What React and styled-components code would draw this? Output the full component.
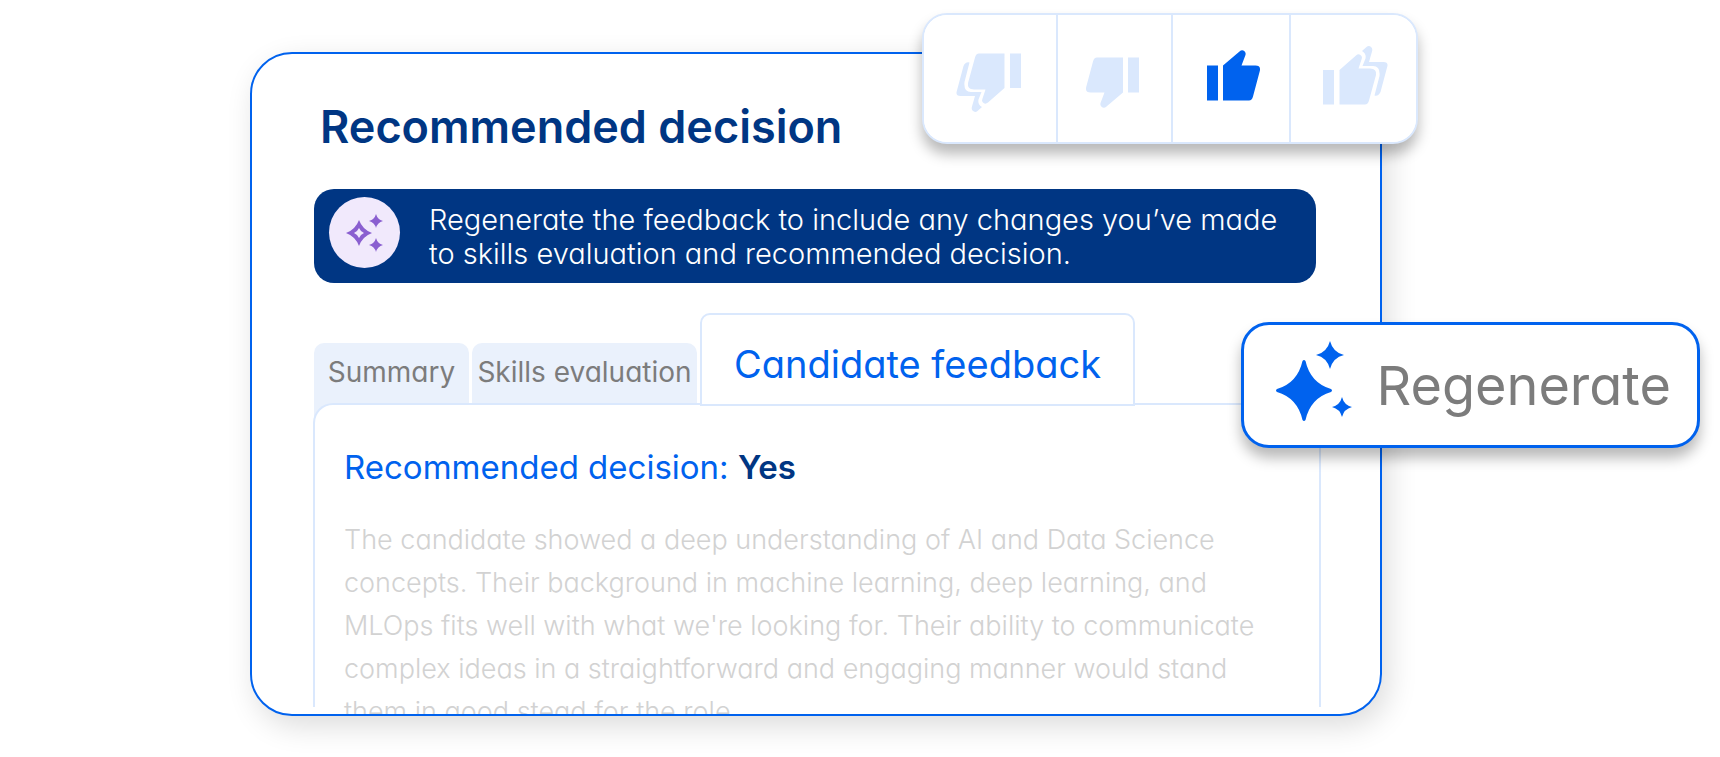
import React, {useState} from "react";
import styled, {createGlobalStyle, css} from "styled-components";

const GlobalStyle = createGlobalStyle`
:root {
--color-primary: #0062ee;
--color-navy: #003683;
--color-pale: #dae8fd;
--color-tab: #eaf1fc;
--color-grey: #7c7c7c;
--color-grey-light: #d2d2d2;
--shadow-float: 0 10px 14px rgba(0, 0, 0, 0.28);
}

* {
box-sizing: border-box;
}

body {
margin: 0;
background-color: white;
font-family: Inter, "Open Sans", sans-serif;
font-feature-settings: "cv11";
overflow-x: hidden;
}

button {
font: inherit;
font-feature-settings: inherit;
cursor: pointer;
}
`;

const Stage = styled.main`
position: relative;
margin: 52px 338px 40px 250px;
`;
const Card = styled.section`
height: 664px;
padding: 47px 60px 0 62px;
border: 2px solid var(--color-primary);
border-radius: 42px;
background-color: white;
box-shadow: 6px 10px 30px rgba(0, 0, 0, 0.14);
overflow: hidden;
`;
const Title = styled.h1`
margin: 0;
padding-left: 6px;
font-size: 45px;
line-height: 52px;
font-weight: 600;
color: var(--color-navy);
`;
const Banner = styled.div`
display: flex;
align-items: flex-start;
gap: 29px;
height: 94px;
margin: 36px 4px 0 0;
padding: 8px 15px;
border-radius: 20px;
background-color: var(--color-navy);
`;
const BannerText = styled.p`
margin: 0;
padding-top: 6px;
font-size: 29px;
line-height: 34px;
font-weight: 300;
color: white;
white-space: nowrap;
`;
const Badge = styled.span`
display: flex;
align-items: center;
justify-content: center;
flex: none;
width: 71px;
height: 71px;
border-radius: 50%;
background-color: #f1e9fc;
`;
const TabList = styled.div`
display: grid;
grid-template-columns: 155px 225px 435px;
align-items: end;
gap: 3px;
height: 91px;
margin: 30px 0 -1px;
`;
const Tab = styled.button`
height: 77px;
margin-bottom: -16px;
padding: 0 0 20px;
border: 0;
border-radius: 10px 10px 0 0;
background-color: var(--color-tab);
font-size: 28px;
color: var(--color-grey);
white-space: nowrap;

${({$active}) => $active && css`
position: relative;
z-index: 1;
height: 93px;
margin-bottom: -2px;
padding: 8px 0 0;
border: 2px solid var(--color-pale);
background-color: white;
font-size: 38px;
color: var(--color-primary);
`}
`;
const Panel = styled.div`
position: relative;
height: 304px;
margin: 0 -1px;
padding: 40px 29px 0;
border: 2px solid var(--color-pale);
border-bottom: 0;
border-radius: 20px 20px 0 0;
background-color: white;
`;
const Decision = styled.h2`
margin: 0;
font-size: 33px;
line-height: 44px;
font-weight: 400;
color: var(--color-primary);
`;
const Verdict = styled.strong`
font-weight: 600;
color: var(--color-navy);
`;
const Feedback = styled.p`
margin: 29px 0 0;
font-size: 27px;
line-height: 43px;
font-weight: 300;
color: var(--color-grey-light);
`;
const VoteBar = styled.div`
position: absolute;
top: -39px;
right: -36px;
display: grid;
grid-template-columns: 132px 115px 118px 127px;
height: 131px;
border: 2px solid var(--color-pale);
border-radius: 25px;
background-color: white;
box-shadow: var(--shadow-float);
overflow: hidden;
`;
const Vote = styled.button`
display: flex;
align-items: center;
justify-content: center;
padding: ${({$down}) => $down ? "8px 4px 0 0" : "0 0 6px 4px"};
border: 0;
background-color: white;
color: ${({$active}) => $active ? "var(--color-primary)" : "var(--color-pale)"};

& + & {
border-left: 2px solid var(--color-pale);
}
`;
const RegenerateButton = styled.button`
position: absolute;
top: 270px;
right: -318px;
display: flex;
align-items: center;
gap: 24px;
height: 126px;
padding: 0 26px 0 32px;
border: 3px solid var(--color-primary);
border-radius: 28px;
background-color: white;
box-shadow: var(--shadow-float);
font-size: 54px;
color: var(--color-grey);

svg {
color: var(--color-primary);
}
`;

const
votes = [
  {label: "Strong no", down: true, double: true},
  {label: "No", down: true},
  {label: "Yes"},
  {label: "Strong yes", double: true},
],
tabs = ["Summary", "Skills evaluation", "Candidate feedback"],
feedback = [
  "The candidate showed a deep understanding of AI and Data Science",
  "concepts. Their background in machine learning, deep learning, and",
  "MLOps fits well with what we're looking for. Their ability to communicate",
  "complex ideas in a straightforward and engaging manner would stand",
  "them in good stead for the role.",
],
Thumb = ({down}) => (
  <svg width="53" height="51" viewBox="0 0 53 51" fill="currentColor" aria-hidden="true">
    <g transform={down ? "rotate(180 26.5 25.5)" : undefined}>
      <path d="M0 15.500H11V50.500H0z"/>
      <path d="M16 15.500 32.500 1.500Q35 -.7 37.500 1.200Q39.300 2.800 38.300 5.500L34.500 15.500H48.500Q54 15.500 52.800 21L46 46.500Q45 50.500 42 50.500H16z"/>
    </g>
  </svg>
),
DoubleThumb = ({down}) => (
  <svg width="65" height="59" viewBox="0 0 65 59" fill="currentColor" aria-hidden="true">
    <g transform={down ? "rotate(180 32.5 29.5)" : undefined}>
      <path d="M0 24H11V58.500H0z"/>
      <path d="M16.500 24 33 9.500Q36 7 38.500 10Q39.500 11.500 38.500 13.500L35.500 22.500H47Q54 22.500 53 29L46 54.500Q45 58.500 42 58.500H16.500z"/>
      <path d="M39 5 43.500 1Q46 -1 48.500 1.500Q49.800 3 49 5.500L46 16H60.500Q65.500 16 64.300 20.500L57.500 46Q55.500 50.500 51.500 49.500L56.500 30Q57.500 20 50 20H39.500L42.500 12.500Q43.500 7.500 39 5z"/>
    </g>
  </svg>
),
Sparkles = () => (
  <svg width="76" height="88" viewBox="0 0 76 88" fill="currentColor" aria-hidden="true">
    <path d="M26.500 20Q28 18 29.500 20Q34.500 42 55 48Q57 49.500 55 51Q34.500 57 29.500 79Q28 81 26.500 79Q21.500 57 1 51Q-1 49.500 1 48Q21.500 42 26.500 20z"/>
    <path d="M54 0Q57 11.500 68 14Q57 16.500 54 28Q51 16.500 40 14Q51 11.500 54 0z"/>
    <path d="M66 56Q68 64 76 66Q68 68 66 76Q64 68 56 66Q64 64 66 56z"/>
  </svg>
),
OutlineSparkles = () => (
  <svg width="38" height="38" viewBox="0 0 38 38" fill="#8a5fd0" aria-hidden="true">
    <path fillRule="evenodd" d="M13 6Q16.500 15.500 26 19Q16.500 22.500 13 32Q9.500 22.500 0 19Q9.500 15.500 13 6zM13 14Q11.500 17.500 8 19Q11.500 20.500 13 24Q14.500 20.500 18 19Q14.500 17.500 13 14z"/>
    <path d="M30 0Q31.500 5.500 37 7Q31.500 8.500 30 14Q28.500 8.500 23 7Q28.500 5.500 30 0z"/>
    <path d="M30 24Q31.500 29.500 37 31Q31.500 32.500 30 38Q28.500 32.500 23 31Q28.500 29.500 30 24z"/>
  </svg>
),
Rating = () => {
  const [vote, setVote] = useState(2);
  return (
    <VoteBar role="group" aria-label="Recommended decision">
      {votes.map(({label, down, double}, i) => (
        <Vote key={label} aria-label={label} aria-pressed={vote === i} $down={down} $active={vote === i} onClick={() => setVote(i)}>
          {double ? <DoubleThumb down={down}/> : <Thumb down={down}/>}
        </Vote>
      ))}
    </VoteBar>
  );
},
Tabs = () => {
  const [active, setActive] = useState(2);
  return (
    <TabList role="tablist">
      {tabs.map((tab, i) => (
        <Tab key={tab} role="tab" aria-selected={active === i} $active={active === i} onClick={() => setActive(i)}>
          {tab}
        </Tab>
      ))}
    </TabList>
  );
};

export default function App() {
  return (
    <>
      <GlobalStyle/>
      <Stage>
        <Card>
          <Title>Recommended decision</Title>
          <Banner>
            <Badge><OutlineSparkles/></Badge>
            <BannerText>
              Regenerate the feedback to include any changes you’ve made<br/>
              to skills evaluation and recommended decision.
            </BannerText>
          </Banner>
          <Tabs/>
          <Panel role="tabpanel">
            <Decision>Recommended decision: <Verdict>Yes</Verdict></Decision>
            <Feedback>
              {feedback.map((line, i) => <React.Fragment key={i}>{line}<br/></React.Fragment>)}
            </Feedback>
          </Panel>
        </Card>
        <Rating/>
        <RegenerateButton><Sparkles/>Regenerate</RegenerateButton>
      </Stage>
    </>
  );
}
